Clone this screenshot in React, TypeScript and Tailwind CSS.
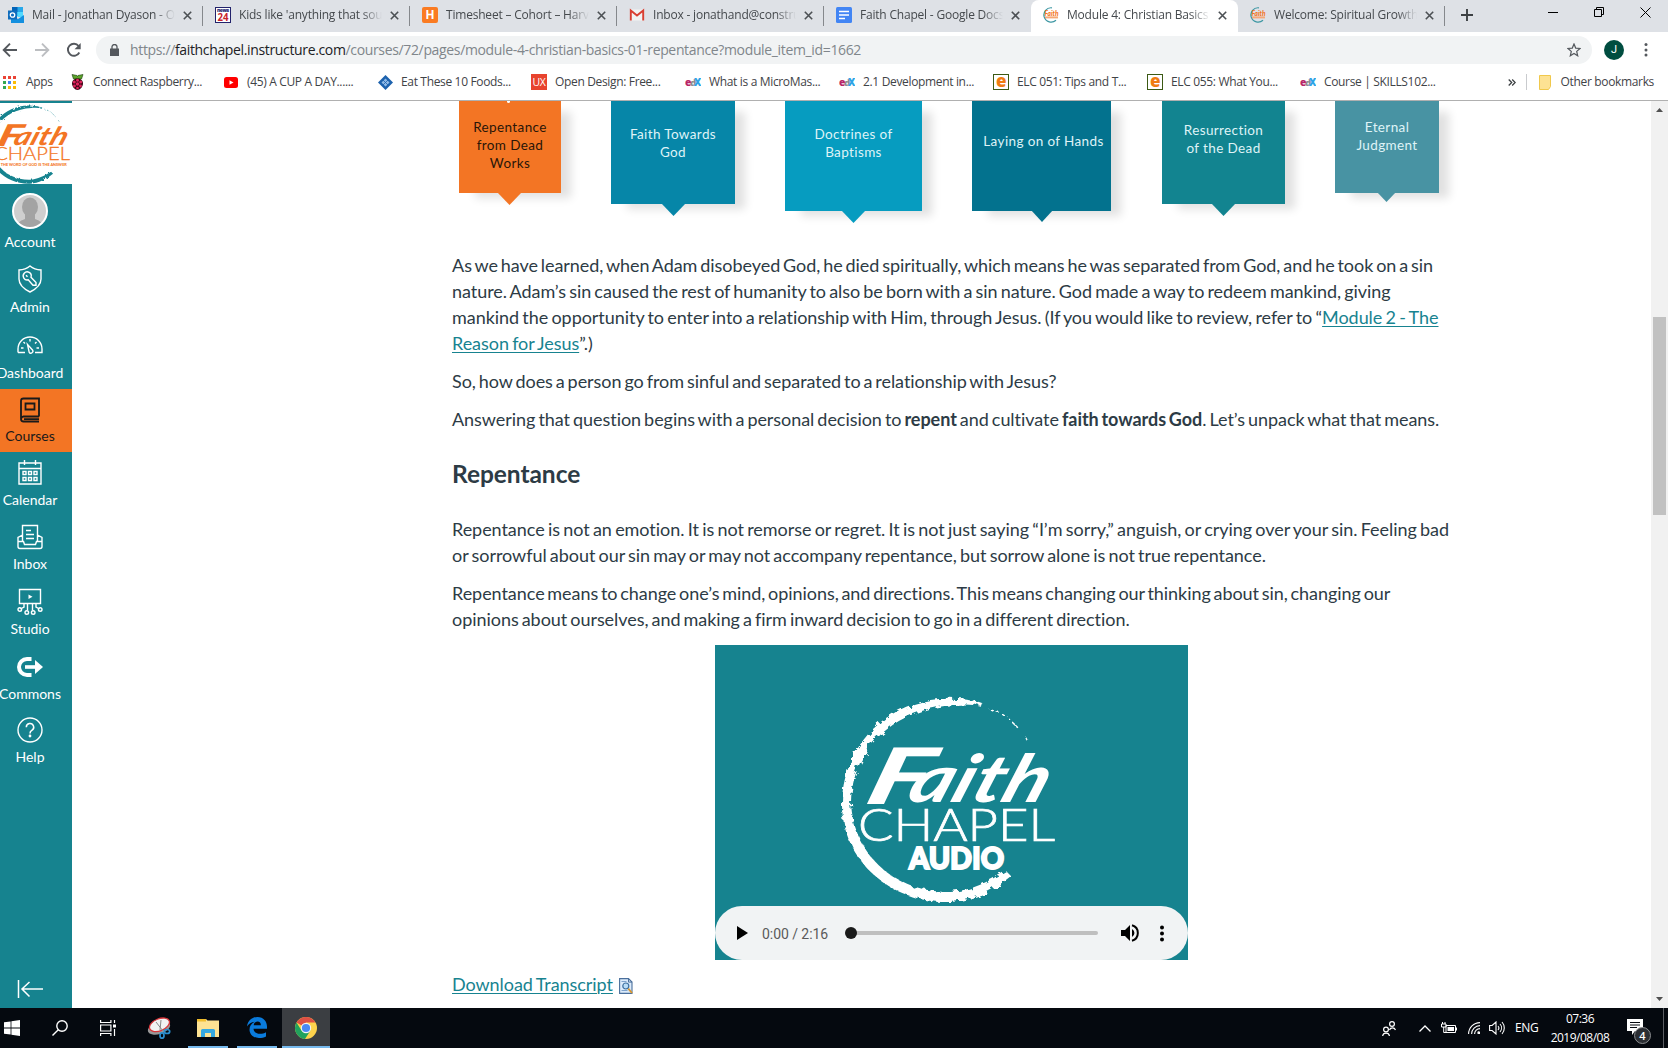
import React from "react";

const UI = "font-['Open_Sans','Noto_Sans',sans-serif]";

/* ---------- Faith Chapel logo ---------- */
function Logo({ ring, ink, className, tail }: { ring: string; ink: string; className: string; tail: "audio" | "tagline" }) {
  const id = "brush-" + tail;
  return (
    <svg className={className} viewBox="-112 -108 226 216" fill={ink}>
      <defs>
        <filter id={id} x="-10%" y="-10%" width="120%" height="120%">
          <feTurbulence type="fractalNoise" baseFrequency="0.14" numOctaves="3" seed="4" result="n" />
          <feDisplacementMap in="SourceGraphic" in2="n" scale="8" />
        </filter>
      </defs>
      <g filter={`url(#${id})`} fill={ring}>
        <path d="M10 -101 C-55 -105 -102 -55 -103 2 C-104 62 -52 104 6 102 C30 100 48 91 66 76 L61 71 C42 82 28 90 6 92 C-48 93 -92 56 -94 2 C-93 -48 -55 -91 10 -95 Z" />
        <path d="M10 -101 C22 -101 30 -99 38 -96 L37 -93 C28 -96 20 -96 10 -95 Z" />
        <path d="M44 -92 L54 -88 M58 -85 L65 -80 M69 -76 L73 -72 M80 -63 L82 -60" stroke={ring} strokeWidth="1.5" strokeDasharray="4 3" fill="none" />
      </g>
      <g className="font-['Lato',sans-serif] italic" fontWeight="700">
        <text transform="translate(-82 4) skewX(-16)" fontSize="78" fontWeight="900" textLength="62" lengthAdjust="spacingAndGlyphs">F</text>
        <text transform="translate(-40 2) skewX(-20)" fontSize="66" textLength="138" lengthAdjust="spacingAndGlyphs">aith</text>
      </g>
      <text className="font-['Lato',sans-serif]" x="-87" y="41" fontSize="46" fontWeight="300" stroke={ink} strokeWidth=".7" textLength="197" lengthAdjust="spacingAndGlyphs">CHAPEL</text>
      {tail === "audio" ? (
        <text className="font-['Lato',sans-serif]" x="-36" y="69" fontSize="31" fontWeight="900" stroke={ink} strokeWidth="2" textLength="95" lengthAdjust="spacingAndGlyphs">AUDIO</text>
      ) : (
        <text className="font-['Lato',sans-serif]" x="-70" y="56" fontSize="10.5" fontWeight="900" textLength="172" lengthAdjust="spacingAndGlyphs">THE WORD OF GOD IS THE ANSWER</text>
      )}
    </svg>
  );
}

function FaithFavicon() {
  return (
    <svg className="size-4" viewBox="0 0 16 16">
      <path d="M9 .8A7.2 7.2 0 1 0 13 13.2" fill="none" stroke="#3d97a3" strokeWidth="1.2" />
      <text x="1.5" y="8.5" fontSize="6.5" fontWeight="900" fill="#f37524" className="font-['Lato',sans-serif] italic" textLength="14">Faith</text>
      <path d="M2 10.4h13" stroke="#f6a877" strokeWidth="2" />
    </svg>
  );
}

/* ---------- Tab strip ---------- */
const Outlook = () => (
  <svg className="size-4" viewBox="0 0 16 16">
    <path d="M4 0h11v9H4z" fill="#28a8ea" /><path d="M4 0h5.500v5H4z" fill="#0364b8" /><path d="M9.500 5H15v5H9.500z" fill="#50d9ff" />
    <path d="M3 8l7 4 6-4v8H3z" fill="#1490df" /><path d="M0 3.500h9v9H0z" fill="#0f6cbd" />
    <circle cx="4.500" cy="8" r="2.200" fill="none" stroke="#fff" strokeWidth="1.300" />
  </svg>
);
const News24 = () => (
  <svg className="size-4" viewBox="0 0 16 16">
    <rect x=".5" y=".5" width="15" height="15" fill="#fff" stroke="#22226b" />
    <text x="2" y="5" fontSize="5" fontWeight="800" fill="#22226b" textLength="12" className="font-['Open_Sans',sans-serif]">news</text>
    <text x="2.5" y="14" fontSize="10" fontWeight="700" fill="#c8242c" textLength="11" lengthAdjust="spacingAndGlyphs" className="font-['Open_Sans',sans-serif]">24</text>
  </svg>
);
const Harvest = () => (
  <span className="flex size-4 items-center justify-center rounded-[2px] bg-[#fa7b22] text-[12px] leading-none font-bold text-white font-['Roboto',sans-serif]">H</span>
);
const Gmail = () => (
  <svg className="size-4" viewBox="0 0 16 16">
    <path d="M1 2.500h14v11H1z" fill="#f2f2f2" /><path d="M1.800 13.500V3.500L8 8.600l6.200-5.100v10" fill="none" stroke="#d93f32" strokeWidth="1.900" />
  </svg>
);
const GDocs = () => (
  <svg className="size-4" viewBox="0 0 16 16"><rect width="16" height="16" rx="1.500" fill="#4285f4" /><path d="M3 4.500h10M3 8h10M3 11.500h6" stroke="#fff" strokeWidth="1.700" /></svg>
);

const tabs = [
  { icon: <Outlook />, title: "Mail - Jonathan Dyason - Outlook", w: "w-[207px] -ml-1" },
  { icon: <News24 />, title: "Kids like 'anything that sounds", w: "w-[207px]" },
  { icon: <Harvest />, title: "Timesheet – Cohort – Harvest", w: "w-[207px]" },
  { icon: <Gmail />, title: "Inbox - jonathand@construct", w: "w-[207px]" },
  { icon: <GDocs />, title: "Faith Chapel - Google Docs", w: "w-[207px]" },
  { icon: <FaithFavicon />, title: "Module 4: Christian Basics 01", w: "w-[207px]" },
  { icon: <FaithFavicon />, title: "Welcome: Spiritual Growth", w: "w-[207px]" },
];

function TabStrip() {
  return (
    <div className="flex h-8 shrink-0 items-stretch bg-[#dee1e6]">
      {tabs.map((t, i) => {
        const active = i === 5;
        return (
          <div key={t.title} className={`relative flex shrink-0 items-center pb-0.5 pl-3 ${t.w} ${active ? "rounded-t-lg bg-white" : ""}`}>
            {t.icon}
            <div className="ml-2 w-[146px] overflow-hidden whitespace-nowrap text-[12px] leading-4 tracking-[-0.2px] text-[#45494d] [mask-image:linear-gradient(90deg,#000_84%,transparent_98%)]">{t.title}</div>
            <svg className="ml-[5px] size-[9px]" viewBox="0 0 9 9"><path d="M.8.8l7.400 7.400M8.200.8L.8 8.200" stroke="#4c5054" strokeWidth="1.600" /></svg>
            {!active && i !== 4 && <span className="absolute top-[6px] right-0 h-5 w-px bg-[#85888c]" />}
          </div>
        );
      })}
      <svg className="mt-[9px] ml-[16px] size-3" viewBox="0 0 12 12"><path d="M6 0v12M0 6h12" stroke="#3c4043" strokeWidth="1.900" /></svg>
      <div className="ml-auto flex gap-[36px] pt-[7px] pr-[17px]">
        <svg className="size-[10px]" viewBox="0 0 10 10"><path d="M0 5.500h10" stroke="#000" /></svg>
        <svg className="size-[10px]" viewBox="0 0 10 10"><path d="M.5 2.500h7v7h-7zM2.500 2.500v-2h7v7h-2" fill="none" stroke="#000" /></svg>
        <svg className="size-[11px]" viewBox="0 0 11 11"><path d="M.5.5l10 10M10.500.5l-10 10" stroke="#000" /></svg>
      </div>
    </div>
  );
}

function Toolbar() {
  return (
    <div className="flex h-9 shrink-0 items-center bg-white">
      <svg className="ml-[2px] size-4" viewBox="0 0 16 16"><path d="M15 8H2M8 1.700L1.700 8 8 14.300" fill="none" stroke="#54585d" strokeWidth="1.900" /></svg>
      <svg className="ml-4 size-4" viewBox="0 0 16 16"><path d="M1 8h13M8 1.700L14.300 8 8 14.300" fill="none" stroke="#bcbec1" strokeWidth="1.900" /></svg>
      <svg className="ml-4 size-4" viewBox="0 0 16 16"><path d="M13.300 10.500A6 6 0 1 1 12.600 4" fill="none" stroke="#54585d" strokeWidth="1.900" /><path d="M14.700 1v6.300H8.500z" fill="#54585d" /></svg>
      <div className="ml-[14px] flex h-7 w-[1496px] items-center rounded-full bg-[#f1f3f4] pl-[14px]">
        <svg className="h-[12px] w-[9px]" viewBox="0 0 9 12"><path d="M0 4.500h9V12H0z" fill="#54585d" /><path d="M2 5V2.800a2.500 2.300 0 0 1 5 0V5" fill="none" stroke="#54585d" strokeWidth="1.300" /></svg>
        <div className="ml-[11px] whitespace-nowrap text-[14px] leading-5 tracking-[-0.35px] text-[#80868b]">
          https://<span className="text-[#202124]">faithchapel.instructure.com</span>/courses/72/pages/module-4-christian-basics-01-repentance?module_item_id=1662
        </div>
        <svg className="mr-[11px] ml-auto size-[14px]" viewBox="0 0 14 14"><path d="M7 1l1.700 4.100 4.300.4-3.300 2.900 1 4.400L7 10.500l-3.700 2.300 1-4.400L1 5.500l4.300-.4z" fill="none" stroke="#54585d" strokeWidth="1.200" /></svg>
      </div>
      <span className="ml-3 flex size-5 items-center justify-center rounded-full bg-[#004d40] text-[11px] text-white font-['Roboto',sans-serif]">J</span>
      <svg className="ml-[20px] h-4 w-1" viewBox="0 0 4 16" fill="#54585d"><circle cx="2" cy="2.500" r="1.500" /><circle cx="2" cy="8" r="1.500" /><circle cx="2" cy="13" r="1.500" /></svg>
    </div>
  );
}

/* ---------- Bookmarks ---------- */
const AppsIcon = () => (
  <svg className="size-[13px]" viewBox="0 0 13 13">
    <path d="M0 0h3v3H0zM5 0h3v3H5zM10 0h3v3h-3z" fill="#ea4335" /><path d="M0 5h3v3H0zM0 10h3v3H0z" fill="#34a853" /><path d="M5 5h3v3H5z" fill="#4285f4" /><path d="M10 5h3v3h-3zM5 10h3v3H5zM10 10h3v3h-3z" fill="#fbbc05" />
  </svg>
);
const Raspberry = () => (
  <svg className="h-4 w-[13px]" viewBox="0 0 13 16">
    <path d="M1 .5l5 1 .5 1 .5-1 5-1-1.500 4.500h-8z" fill="#5da52b" stroke="#163a0a" strokeWidth=".6" /><path d="M6.500 4.500c3 0 5.500 2 5.500 5S9 16 6.500 16 1 12.500 1 9.500s2.500-5 5.500-5z" fill="#3b0514" />
    <g fill="#e0245e"><circle cx="6.500" cy="6.300" r="1.500" /><circle cx="3.300" cy="8" r="1.500" /><circle cx="9.700" cy="8" r="1.500" /><circle cx="6.500" cy="10" r="1.700" /><circle cx="3.500" cy="12" r="1.400" /><circle cx="9.500" cy="12" r="1.400" /><circle cx="6.500" cy="14" r="1.300" /></g>
  </svg>
);
const YouTube = () => (
  <svg className="h-[11px] w-[14px]" viewBox="0 0 14 11"><rect width="14" height="11" rx="2.500" fill="#f00" /><path d="M5.500 3.200v4.600l4-2.300z" fill="#fff" /></svg>
);
const Diamond = () => (
  <svg className="size-[15px]" viewBox="0 0 15 15"><path d="M7.500 0L15 7.500 7.500 15 0 7.500z" fill="#1d62ae" /><path d="M7.500 3.500l4 4-4 4-4-4z" fill="#8fb9e6" /><path d="M4 4l7 7M11 4l-7 7" stroke="#1d62ae" strokeWidth=".8" /></svg>
);
const Ux = () => <span className="flex size-4 items-center justify-center bg-[#e8432e] text-[10.500px] leading-none tracking-[-0.3px] text-white">UX</span>;
const Edx = () => (
  <svg className="h-[10px] w-4" viewBox="0 0 16 10" fontWeight="800" fontSize="11">
    <text x="5" y="8.500" fill="#8e8e8e" fontSize="9.500" textLength="6" lengthAdjust="spacingAndGlyphs" className="font-['Open_Sans',sans-serif]">d</text>
    <text x="0" y="8.500" fill="#b72667" textLength="6" lengthAdjust="spacingAndGlyphs" className="font-['Open_Sans',sans-serif]">e</text>
    <text x="9" y="8.500" fill="#2ea3e6" textLength="7" lengthAdjust="spacingAndGlyphs" className="font-['Open_Sans',sans-serif]">X</text>
  </svg>
);
const Elc = () => <span className="flex size-4 items-center justify-center border border-[#3c5a14] bg-white pb-[3px] text-[17px] leading-none font-extrabold text-[#f07c12]">e</span>;

const bookmarks = [
  { icon: <AppsIcon />, label: "Apps", w: "w-[68px]", pad: "ml-[10px]" },
  { icon: <Raspberry />, label: "Connect Raspberry...", w: "w-[153px]", pad: "ml-[9px]" },
  { icon: <YouTube />, label: "(45) A CUP A DAY......", w: "w-[154px]", pad: "ml-[9px]" },
  { icon: <Diamond />, label: "Eat These 10 Foods...", w: "w-[153px]", pad: "ml-2" },
  { icon: <Ux />, label: "Open Design: Free...", w: "w-[154px]", pad: "ml-2" },
  { icon: <Edx />, label: "What is a MicroMas...", w: "w-[154px]", pad: "ml-2" },
  { icon: <Edx />, label: "2.1 Development in...", w: "w-[154px]", pad: "ml-2" },
  { icon: <Elc />, label: "ELC 051: Tips and T...", w: "w-[154px]", pad: "ml-2" },
  { icon: <Elc />, label: "ELC 055: What You...", w: "w-[153px]", pad: "ml-2" },
  { icon: <Edx />, label: "Course | SKILLS102...", w: "w-[154px]", pad: "ml-2" },
];

function BookmarksBar() {
  return (
    <div className="flex h-[33px] shrink-0 items-center border-b border-[#b0b0b0] bg-white pb-1 pl-[3px] text-[12px] leading-4 tracking-[-0.34px] text-[#3f4347]">
      {bookmarks.map((b, i) => (
        <div key={i} className={`flex shrink-0 items-center whitespace-nowrap ${b.w}`}>
          {b.icon}
          <span className={b.pad}>{b.label}</span>
        </div>
      ))}
      <svg className="ml-auto h-[7px] w-2" viewBox="0 0 8 7"><path d="M.7.500l3 3-3 3M4.200.500l3 3-3 3" fill="none" stroke="#3c4043" strokeWidth="1.300" /></svg>
      <span className="ml-[10px] h-4 w-px bg-[#c9cbce]" />
      <svg className="ml-3 h-[15px] w-3" viewBox="0 0 12 15"><path d="M.5.500h11v11l-2 3h-9z" fill="#fde293" stroke="#f0c84c" /></svg>
      <span className="mr-[14px] ml-[10px]">Other bookmarks</span>
    </div>
  );
}

/* ---------- Canvas global navigation ---------- */
const S = ({ children, w = 26, h = 26 }: { children: React.ReactNode; w?: number; h?: number }) => (
  <svg width={w} height={h} viewBox={`0 0 ${w} ${h}`} fill="none" stroke="currentColor" strokeWidth="1.4">{children}</svg>
);

const nav = [
  {
    label: "Account", h: "h-[75px]", box: "h-[50px] pt-1",
    icon: (
      <svg className="size-9" viewBox="0 0 36 36">
        <defs><clipPath id="avatar"><circle cx="18" cy="18" r="17" /></clipPath></defs>
        <circle cx="18" cy="18" r="17" fill="#cfcfcf" />
        <g clipPath="url(#avatar)" fill="#a3a3a3"><ellipse cx="18" cy="14" rx="8" ry="9.500" /><path d="M13 20h10v6c3 1.500 8 2 9 10H4c1-8 6-8.500 9-10z" /></g>
        <circle cx="18" cy="18" r="17" fill="none" stroke="#fff" strokeWidth="2" />
      </svg>
    ),
  },
  {
    label: "Admin", h: "h-[66px]", box: "h-10",
    icon: (
      <S w={26} h={28}>
        <path d="M13 1c3 2.500 7 3.800 11 4v9c0 6-5 10-11 13C7 24 2 20 2 14V5c4-.2 8-1.500 11-4z" />
        <path d="M7.200 8.300a4 4 0 0 1 6.800 3.900l5 5.300v2.700h-3l-4.800-5.400a4 4 0 0 1-4-6.500zM9 10.200l1.500 1.600" />
      </S>
    ),
  },
  {
    label: "Dashboard", h: "h-[64px]", box: "h-10",
    icon: (
      <S w={26} h={18}>
        <path d="M1 16.500V13a12 12 0 0 1 24 0v3.500h-7M8 16.500H1M4 12h2.500M22 12h-2.500M6.500 6l1.500 1.500M19.500 6L18 7.500M13 3v2.500" />
        <path d="M10.500 8.500l5 5.500a2 2 0 0 1-3.300 2.300z" />
      </S>
    ),
  },
  {
    label: "Courses", h: "h-[63px]", box: "h-[39px] pt-[3px]", active: true,
    icon: (
      <S w={22} h={26}>
        <path d="M20 19.500V1.500H4.500a2.500 2.500 0 0 0-2.500 2.500v18a2.500 2.500 0 0 0 2.500 2.500H20M2.200 21.500A2.500 2.500 0 0 1 4.500 19.500H20M5 22.200h15M6.500 6.500h9v6h-9z" strokeWidth="1.800" />
      </S>
    ),
  },
  {
    label: "Calendar", h: "h-[64px]", box: "h-10",
    icon: (
      <S w={24} h={26}>
        <path d="M1 4h22v21H1zM1 9.500h22M6.500 1v5M17.500 1v5" />
        <path d="M5 12.500h3v3H5zM10.500 12.500h3v3h-3zM16 12.500h3v3h-3zM5 18.500h3v3H5zM10.500 18.500h3v3h-3zM16 18.500h3v3h-3z" />
      </S>
    ),
  },
  {
    label: "Inbox", h: "h-[64px]", box: "h-10 pt-px",
    icon: (
      <S w={26} h={26}>
        <path d="M5.500 17V1.500h15V17M9 6.500h5M9 10.500h8M9 14.500h8M5.500 11L1 13.500v9A2 2 0 0 0 3 24.500h20a2 2 0 0 0 2-2v-9L20.500 11M1 17.500h5.500l1 3h11l1-3H25" />
      </S>
    ),
  },
  {
    label: "Studio", h: "h-[65px]", box: "h-[41px] pt-[2px]",
    icon: (
      <S w={26} h={28}>
        <path d="M2.500 1.500h21v14h-21zM10.500 15.500v7M15.500 15.500v7M7 15.500v3.500L3.500 21M19 15.500v3.500l3.500 2" />
        <path d="M11.500 6.500v4.500l4-2.200z" fill="currentColor" stroke="none" />
        <circle cx="2.800" cy="21.500" r="1.800" /><circle cx="9.800" cy="24.500" r="1.800" /><circle cx="16.200" cy="24.500" r="1.800" /><circle cx="23.200" cy="21.500" r="1.800" />
      </S>
    ),
  },
  {
    label: "Commons", h: "h-[64px]", box: "h-[41px] pt-[3px]",
    icon: (
      <S w={26} h={20}>
        <path d="M14.500 2h-4.500a8 8 0 0 0 0 16h4.500" strokeWidth="4" /><path d="M8 10h12" strokeWidth="3.600" /><path d="M18 3l8 7-8 7z" fill="currentColor" stroke="none" />
      </S>
    ),
  },
  {
    label: "Help", h: "h-[64px]", box: "h-10 pt-[2px]",
    icon: (
      <S>
        <circle cx="13" cy="13" r="12" /><path d="M9.300 10.200a3.700 3.700 0 1 1 5.500 3.200c-1.300.8-1.800 1.300-1.800 3" strokeWidth="1.500" /><circle cx="13" cy="19" r=".7" fill="currentColor" />
      </S>
    ),
  },
];

function GlobalNav() {
  return (
    <nav className="flex w-[72px] shrink-0 flex-col overflow-hidden bg-[#16838f] font-['Lato',sans-serif] text-white">
      <div className="mt-0.5 h-[81px] shrink-0 overflow-hidden bg-white">
        <Logo ring="#16838f" ink="#f37524" tail="tagline" className="-ml-[16px] h-[83px] w-[88px] max-w-none shrink-0" />
      </div>
      {nav.map((n) => (
        <div key={n.label} className={`-ml-3 flex w-[84px] shrink-0 flex-col items-center ${n.h} ${n.active ? "bg-[#f37524] text-[#1a1a1a]" : ""}`}>
          <div className={`flex shrink-0 items-center justify-center ${n.box}`}>{n.icon}</div>
          <div className="text-[14px] leading-4">{n.label}</div>
        </div>
      ))}
      <svg className="mt-auto mb-[9px] ml-[17px] h-[20px] w-[26px] shrink-0" viewBox="0 0 26 20"><path d="M1.500 1v18M26 10H5M12.500 3L5 10l7.500 7.500" fill="none" stroke="#fff" strokeWidth="1.500" /></svg>
    </nav>
  );
}

/* ---------- Page content ---------- */
const cards = [
  { lines: ["Repentance", "from Dead", "Works"], box: "ml-[7px] w-[102px] h-[92px] pt-[17px] bg-[#f37524] text-[#2a1608]", tip: "-bottom-[12px] left-[38px] w-[25px] h-[13px] bg-[#f37524]" },
  { lines: ["Faith Towards", "God"], box: "ml-[50px] w-[124px] h-[103px] pt-[24px] bg-[#0686a8] text-[#dff3f7]", tip: "-bottom-[12px] left-[50px] w-[25px] h-[13px] bg-[#0686a8]" },
  { lines: ["Doctrines of", "Baptisms"], box: "ml-[50px] w-[137px] h-[110px] pt-[24px] bg-[#069cc0] text-[#dff3f7]", tip: "-bottom-[12px] left-[56px] w-[25px] h-[13px] bg-[#069cc0]" },
  { lines: ["Laying on of Hands"], box: "ml-[50px] w-[139px] h-[110px] pt-[31px] pl-1 bg-[#03728e] text-[#dff3f7]", tip: "-bottom-[11px] left-[59px] w-[22px] h-[12px] bg-[#03728e]" },
  { lines: ["Resurrection", "of the Dead"], box: "ml-[51px] w-[123px] h-[103px] pt-[20px] bg-[#128490] text-[#dff3f7]", tip: "-bottom-[12px] left-[49px] w-[25px] h-[13px] bg-[#128490]" },
  { lines: ["Eternal", "Judgment"], box: "ml-[50px] w-[104px] h-[92px] pt-[17px] bg-[#4893a3] text-[#dff3f7]", tip: "-bottom-[9px] left-[42px] w-[19px] h-[10px] bg-[#4893a3]" },
];

function Cards() {
  return (
    <div className="flex h-[151px] items-start overflow-hidden">
      {cards.map((c, i) => (
        <div key={c.lines[0]} className={`relative shrink-0 text-center text-[13.5px] leading-[18px] tracking-[0.38px] whitespace-nowrap shadow-[13px_8px_9px_-3px_rgba(0,0,0,0.12)] ${c.box}`}>
          {i === 0 && <span className="absolute top-0 left-[48px] h-[2px] w-[3px] rounded-b-full bg-white" />}
          {c.lines.map((l) => <div key={l}>{l}</div>)}
          <span className={`absolute [clip-path:polygon(0_0,100%_0,50%_100%)] ${c.tip}`} />
        </div>
      ))}
    </div>
  );
}

const Link = ({ children }: { children: React.ReactNode }) => <a className="text-[#178390] underline decoration-1 underline-offset-2">{children}</a>;

function Player() {
  return (
    <div className="mt-[13px] ml-[263px] flex h-[315px] w-[473px] flex-col bg-[#16838f]">
      <div className="h-[261px]">
        <Logo ring="#fff" ink="#fff" tail="audio" className="mt-[47px] ml-[118px] h-[216px] w-[226px]" />
      </div>
      <div className="flex h-[54px] items-center rounded-full bg-[#f1f3f4] pl-[22px] text-black">
        <svg className="h-[14px] w-[11px]" viewBox="0 0 11 14"><path d="M0 0l11 7-11 7z" /></svg>
        <span className="mt-px ml-[14px] w-[68px] whitespace-nowrap text-[14px] leading-5 text-[#5a5a5a] font-['Roboto',sans-serif]">0:00 / 2:16</span>
        <span className="relative ml-[21px] h-1 w-[247px] rounded-full bg-[#bfbfbf]"><span className="absolute -top-1 -left-[6px] size-3 rounded-full bg-[#1a1a1a]" /></span>
        <svg className="ml-[23px] h-[18px] w-[19px]" viewBox="0 0 19 18"><path d="M0 6h4l5-5v16l-5-5H0zM11 5a4.500 4.500 0 0 1 0 8z" /><path d="M11 1.300a8 8 0 0 1 0 15.400" fill="none" stroke="#000" strokeWidth="2" /></svg>
        <svg className="ml-[20px] h-[17px] w-1" viewBox="0 0 4 17"><circle cx="2" cy="2.500" r="2" /><circle cx="2" cy="8.500" r="2" /><circle cx="2" cy="14.500" r="2" /></svg>
      </div>
    </div>
  );
}

function Article() {
  return (
    <main className="flex-1 overflow-hidden bg-white pl-[380px] font-['Lato',sans-serif] text-[#2d3b45]">
      <Cards />
      <div className="flex flex-col whitespace-nowrap text-[18px] leading-[26px] tracking-[-0.05px]">
        <p>
          <span className="block [word-spacing:-1.65px]">As we have learned, when Adam disobeyed God, he died spiritually, which means he was separated from God, and he took on a sin</span>
          <span className="block [word-spacing:-1.38px]">nature. Adam’s sin caused the rest of humanity to also be born with a sin nature. God made a way to redeem mankind, giving</span>
          <span className="block [word-spacing:-1.27px]">mankind the opportunity to enter into a relationship with Him, through Jesus. (If you would like to review, refer to “<Link>Module 2 - The</Link></span>
          <span className="block [word-spacing:-1.3px]"><Link>Reason for Jesus</Link>”.)</span>
        </p>
        <p className="mt-3 [word-spacing:-1.62px]">So, how does a person go from sinful and separated to a relationship with Jesus?</p>
        <p className="mt-3 [word-spacing:-1.5px]">Answering that question begins with a personal decision to <b>repent</b> and cultivate <b>faith towards God</b>. Let’s unpack what that means.</p>
        <h2 className="flex h-[84px] items-center text-[24.5px] font-bold">Repentance</h2>
        <p>
          <span className="block [word-spacing:-1.24px]">Repentance is not an emotion. It is not remorse or regret. It is not just saying “I’m sorry,” anguish, or crying over your sin. Feeling bad</span>
          <span className="block [word-spacing:-1.32px]">or sorrowful about our sin may or may not accompany repentance, but sorrow alone is not true repentance.</span>
        </p>
        <p className="mt-3">
          <span className="block [word-spacing:-1.8px]">Repentance means to change one’s mind, opinions, and directions. This means changing our thinking about sin, changing our</span>
          <span className="block [word-spacing:-1.46px]">opinions about ourselves, and making a firm inward decision to go in a different direction.</span>
        </p>
        <Player />
        <p className="mt-[11px] flex items-center [word-spacing:-1.2px]">
          <Link>Download Transcript</Link>
          <svg className="mt-[4px] ml-[6px] h-4 w-[14px]" viewBox="0 0 14 16">
            <path d="M.6.600h8.900l3.500 3.500v11.300H.6z" fill="#dcebfb" stroke="#4a6f9c" strokeWidth="1.100" /><path d="M9.500.600v3.500H13" fill="none" stroke="#4a6f9c" />
            <path d="M2.500 3.500h5M2.500 12.500h6" stroke="#7fa3cc" /><circle cx="6.800" cy="8" r="3" fill="#b9dcf7" stroke="#3d6f9f" strokeWidth="1.200" /><path d="M9.300 10.600l3.700 4.400" stroke="#d9962b" strokeWidth="1.800" />
          </svg>
        </p>
      </div>
    </main>
  );
}

function Scrollbar() {
  return (
    <div className="flex w-[17px] shrink-0 flex-col items-center bg-[#f1f1f1]">
      <svg className="mt-[7px] h-1 w-[7px]" viewBox="0 0 7 4"><path d="M0 4l3.500-4L7 4z" fill="#505050" /></svg>
      <div className="mt-[205px] h-[198px] w-[13px] bg-[#c1c1c1]" />
      <svg className="mt-auto mb-[7px] h-1 w-[7px]" viewBox="0 0 7 4"><path d="M0 0l3.500 4L7 0z" fill="#505050" /></svg>
    </div>
  );
}

/* ---------- Windows taskbar ---------- */
function Taskbar() {
  return (
    <div className="flex h-10 shrink-0 items-center bg-[#05090f] text-white">
      <svg className="ml-1 size-4" viewBox="0 0 16 16" fill="#fff"><path d="M0 2.300L6.600 1.400v6.200H0zM7.400 1.300L16 0v7.600H7.400zM0 8.400h6.600v6.200L0 13.700zM7.400 8.400H16V16l-8.600-1.300z" /></svg>
      <svg className="ml-[32px] size-4" viewBox="0 0 16 16" fill="none" stroke="#fff" strokeWidth="1.400"><circle cx="10" cy="6" r="5.200" /><path d="M6.300 9.700L.5 15.500" /></svg>
      <svg className="ml-[32px] size-4" viewBox="0 0 16 16" fill="none" stroke="#fff" strokeWidth="1.200"><path d="M.6 0v2.500h10.300V0M.6 5h10.300v6H.6zM.6 16v-2.500h10.300V16M14.500 0v3M14.500 9v7" /><path d="M13 4.500h3v3h-3z" fill="#fff" stroke="none" /></svg>
      <svg className="ml-[31px] h-[22px] w-6" viewBox="0 0 24 22">
        <ellipse cx="12" cy="11" rx="11.500" ry="6" transform="rotate(-18 12 11)" fill="#999" /><ellipse cx="12.500" cy="8" rx="10.500" ry="6" transform="rotate(-22 12 8)" fill="#f2f2f2" stroke="#d8363a" strokeWidth="1.300" />
        <path d="M9 5l7 9M14 3l-1 10" stroke="#888" /><g fill="none" stroke="#2b8fd0" strokeWidth="1.700"><ellipse cx="15" cy="18.500" rx="2" ry="2.700" /><ellipse cx="20" cy="14.500" rx="2.700" ry="2" /></g>
      </svg>
      <div className="ml-[17px] flex h-10 w-10 flex-col items-center border-b-2 border-[#76b9ed] pt-[11px]">
        <svg className="h-[18px] w-[22px]" viewBox="0 0 22 18"><path d="M0 0h9l1.500 1.500H22V18H0z" fill="#fde293" /><path d="M0 0h9v2.500H0z" fill="#f0bd2c" /><path d="M4 18v-6.500a1.500 1.500 0 0 1 1.500-1.500h11A1.500 1.500 0 0 1 18 11.500V18h-4v-4H8v4z" fill="#35a8e0" /></svg>
      </div>
      <div className="ml-[9px] flex h-10 w-10 flex-col items-center border-b-2 border-[#76b9ed] pt-[9px]">
        <svg className="h-[21px] w-5" viewBox="0 0 20 21"><path d="M0 9.500C1 3 5.500 0 10.500 0 16.500 0 20 4.500 20 9.500v2.300H6.500c.2 3.500 3.500 5 6.500 5 2.300 0 4.300-.6 6-1.600v4.300c-2 1-4.300 1.500-7 1.500C6.500 21 2.500 17.500 2.500 12.500c0-3.500 2-6.200 5-7.800C4.500 5 1.500 6.800 0 9.500zM6.700 8.300h7.200c0-2.300-1.200-3.800-3.300-3.800S7 6 6.700 8.300z" fill="#0a7bdc" /></svg>
      </div>
      <div className="ml-[5px] flex h-10 w-12 flex-col items-center border-b-2 border-[#76b9ed] bg-[#3b3e42] pt-[9px]">
        <svg className="size-[22px]" viewBox="0 0 22 22"><circle cx="11" cy="11" r="11" fill="#fdd24c" /><path d="M11 11L1.500 5.500A11 11 0 0 1 20.500 5.500H11z" fill="#de5044" /><path d="M1.500 5.500A11 11 0 0 0 10 22L15.500 13.500 6.500 13.500z" fill="#21a25d" /><circle cx="11" cy="11" r="5.200" fill="#f4f4f4" /><circle cx="11" cy="11" r="4.100" fill="#4a89f3" /></svg>
      </div>
      <svg className="ml-auto h-[15px] w-[14px]" viewBox="0 0 14 15" fill="none" stroke="#fff" strokeWidth="1.200"><circle cx="10" cy="3" r="2.400" /><path d="M7.500 9a3.200 3.200 0 0 1 6 0" /><circle cx="4" cy="8.500" r="2.400" /><path d="M.6 15a3.500 3.500 0 0 1 6.900 0" /></svg>
      <svg className="ml-[23px] h-[7px] w-3" viewBox="0 0 12 7"><path d="M.5 6.500L6 1l5.500 5.500" fill="none" stroke="#fff" strokeWidth="1.300" /></svg>
      <svg className="ml-[10px] h-3 w-4" viewBox="0 0 16 12" fill="none" stroke="#fff"><path d="M5 3.500h9.500v7H5zM15.500 5.500v3M1.500 0v2M4 0v2M.5 2h4.500v3H.5zM2.700 5v5.500H5" /><path d="M6.500 5h6.500v4H6.500z" fill="#fff" stroke="none" /></svg>
      <svg className="ml-[11px] h-[12px] w-[12px]" viewBox="0 0 12 12" fill="none" stroke="#fff" strokeWidth="1.100"><path d="M.6 12A11.400 11.400 0 0 1 12 .6M3.600 12A8.400 8.400 0 0 1 12 3.600M6.600 12A5.400 5.400 0 0 1 12 6.600" /><circle cx="10.800" cy="10.800" r=".9" fill="#fff" /></svg>
      <svg className="ml-[9px] h-[14px] w-4" viewBox="0 0 16 14" fill="none" stroke="#fff" strokeWidth="1.100"><path d="M.6 4.500h2.500L7 1v12L3.100 9.500H.6zM9 5a3 3 0 0 1 0 4M11 3a6 6 0 0 1 0 8M13 1a9 9 0 0 1 0 12" /></svg>
      <span className="ml-[10px] w-[23px] text-[12px] leading-4 tracking-[-0.4px]">ENG</span>
      <div className="ml-[11px] w-[62px] text-center text-[12px] leading-[19px] tracking-[-0.5px]">07:36<br />2019/08/08</div>
      <div className="relative mt-[-3px] ml-[16px] h-4 w-[16px]">
        <svg className="h-[16px] w-4" viewBox="0 0 16 16"><path d="M0 0h16v12H8l-3 4v-4H0z" fill="#fff" /><path d="M3 3.500h10M3 6h10M3 8.500h7" stroke="#05090f" /></svg>
        <span className="absolute top-[8px] left-[7px] flex size-[17px] items-center justify-center rounded-full border border-[#8b8d90] bg-[#2b2e33] text-[11px] leading-none font-semibold">4</span>
      </div>
      <span className="mr-[4px] ml-[20px] h-10 w-px bg-[#5b5e63]" />
    </div>
  );
}

export default function App() {
  return (
    <div className={`flex h-[1048px] w-[1668px] flex-col overflow-hidden bg-white ${UI}`}>
      <TabStrip />
      <Toolbar />
      <BookmarksBar />
      <div className="flex h-[907px] shrink-0">
        <GlobalNav />
        <Article />
        <Scrollbar />
      </div>
      <Taskbar />
    </div>
  );
}
